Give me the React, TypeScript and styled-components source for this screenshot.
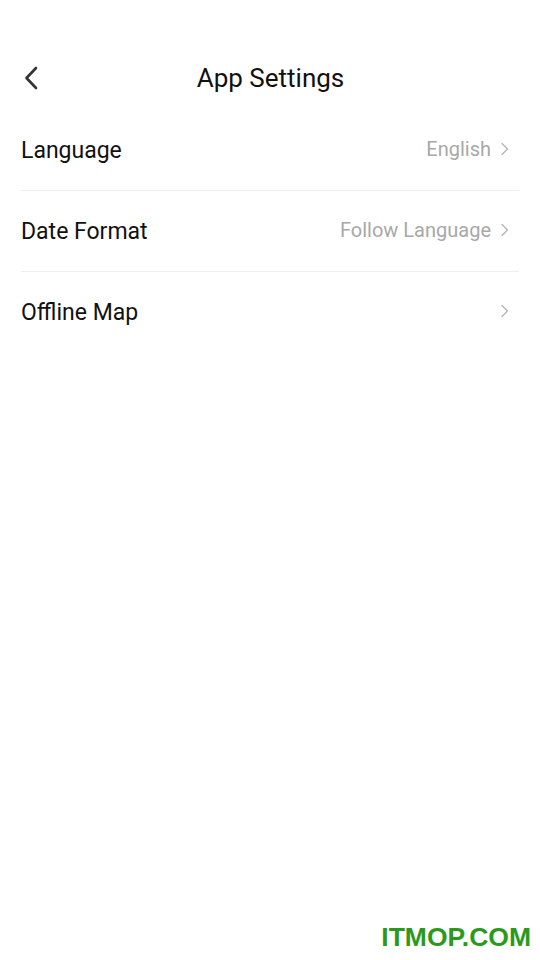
import styled, {createGlobalStyle} from "styled-components";

const GlobalStyle = createGlobalStyle`
    html, body {
        margin: 0;
        padding: 0;
        background: #ffffff;
    }
    body {
        font-family: Roboto, "Noto Sans", sans-serif;
    }
`

const items = [
    {label: 'Language', value: 'English'},
    {label: 'Date Format', value: 'Follow Language'},
    {label: 'Offline Map', value: ''},
]

export default function App() {
    return (<Page>
        <GlobalStyle/>
        <Header>
            <BackButton>
                <svg width="20" height="26" viewBox="0 0 20 26" fill="none">
                    <path d="M14 3L4.5 13L14 23" stroke="#333333" strokeWidth="2.6" strokeLinecap="round"
                          strokeLinejoin="round"/>
                </svg>
            </BackButton>
            <Title>App Settings</Title>
        </Header>
        <List>
            {items.map((item, index) => (<Row key={item.label} last={index === items.length - 1}>
                <Label>{item.label}</Label>
                <Right>
                    {item.value && <Value>{item.value}</Value>}
                    <Chevron/>
                </Right>
            </Row>))}
        </List>
        <Watermark>ITMOP.COM</Watermark>
    </Page>)
}

const Chevron = () => (<svg width="9" height="14" viewBox="0 0 9 14" fill="none">
    <path d="M2 1.5L7.5 7L2 12.5" stroke="#b4b4b4" strokeWidth="1.3" strokeLinecap="round" strokeLinejoin="round"/>
</svg>)

const Page = styled.div`
    position: relative;
    width: 540px;
    height: 960px;
    background: #ffffff;
    overflow: hidden;
`

const Header = styled.div`
    position: relative;
    display: flex;
    align-items: center;
    justify-content: center;
    height: 64px;
    margin-top: 46px;
`

const BackButton = styled.div`
    position: absolute;
    left: 22px;
    top: 19px;
    display: flex;
`

const Title = styled.span`
    font-size: 26px;
    color: #111111;
    margin-left: 1px;
`

const List = styled.div`
    display: flex;
    flex-direction: column;
    padding: 0 21px;
`

const Row = styled.div<{ last: boolean }>`
    display: flex;
    align-items: center;
    justify-content: space-between;
    height: 80px;
    border-bottom: 1px solid ${props => props.last ? 'transparent' : '#efefef'};
`

const Label = styled.span`
    font-size: 23px;
    color: #111111;
    margin-top: 1px;
`

const Right = styled.div`
    display: flex;
    align-items: center;
    gap: 9px;
    padding-right: 10px;
    margin-top: -3px;
`

const Value = styled.span`
    font-size: 20px;
    color: #a8a8a8;
`

const Watermark = styled.div`
    position: absolute;
    right: 9px;
    bottom: 7px;
    font-family: "Liberation Sans", Arial, sans-serif;
    font-weight: bold;
    font-size: 26.5px;
    color: #2b9a1c;
`
